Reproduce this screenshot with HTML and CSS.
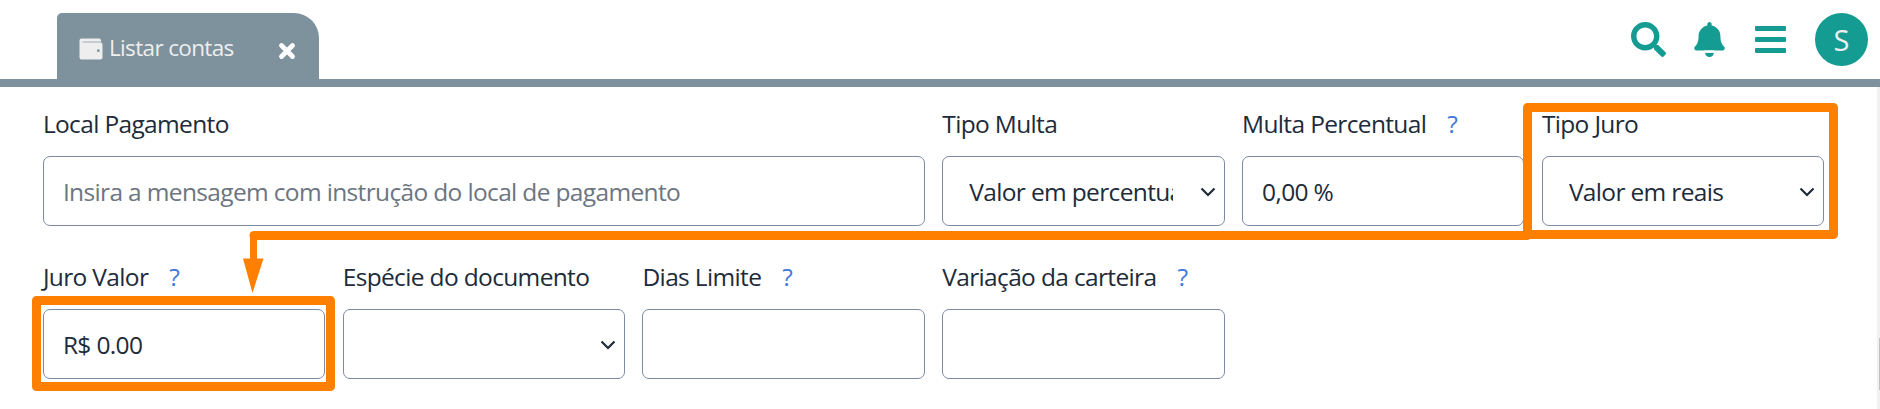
FILE: index.html
```html
<!DOCTYPE html>
<html lang="pt-BR">
<head>
<meta charset="utf-8">
<title>Listar contas</title>
<link rel="stylesheet" href="styles.css">
</head>
<body>
<header class="topbar">
  <div class="tab">
    <svg class="wallet" viewBox="0 0 24 22"><path d="M2.500.500H20a2 2 0 0 1 2 2v2h-.500a2 2 0 0 1 2 2V19.500a2 2 0 0 1-2 2H2.500a2 2 0 0 1-2-2v-17a2 2 0 0 1 2-2z" fill="#eeeeef"/><path d="M3.500 4H22.500" stroke="#a9b7be" stroke-width="1.200"/><circle cx="19.300" cy="12.700" r="1.400" fill="#7d929d"/></svg>
    <span class="tab-title">Listar contas</span>
    <svg class="close" viewBox="0 0 18 18"><path d="M3.500 3.500l11 11M14.500 3.500l-11 11" stroke="#fff" stroke-width="4.800" stroke-linecap="round"/></svg>
  </div>
  <nav class="actions">
    <svg class="icon search" viewBox="0 0 512 512"><path d="M505 442.700L405.300 343c-4.500-4.500-10.600-7-17-7H372c27.600-35.300 44-79.700 44-128C416 93.100 322.900 0 208 0S0 93.100 0 208s93.100 208 208 208c48.300 0 92.700-16.400 128-44v16.300c0 6.400 2.500 12.500 7 17l99.700 99.700c9.400 9.400 24.600 9.400 33.900 0l28.300-28.300c9.400-9.400 9.400-24.600.1-34zM208 336c-70.700 0-128-57.200-128-128 0-70.700 57.200-128 128-128 70.700 0 128 57.200 128 128 0 70.700-57.200 128-128 128z"/></svg>
    <svg class="icon bell" viewBox="0 0 448 512"><path d="M224 512c35.320 0 63.970-28.650 63.970-64H160.030c0 35.350 28.650 64 63.970 64zm215.390-149.710c-19.320-20.760-55.470-51.990-55.470-154.290 0-77.700-54.480-139.900-127.940-155.160V32c0-17.670-14.320-32-31.980-32s-31.980 14.330-31.980 32v20.840C118.560 68.100 64.080 130.300 64.080 208c0 102.300-36.150 133.530-55.470 154.290-6 6.450-8.660 14.160-8.610 21.710.11 16.400 12.980 32 32.100 32h383.800c19.120 0 32-15.600 32.100-32 .05-7.550-2.610-15.270-8.610-21.710z"/><path d="M150 432h148" stroke="#fff" stroke-width="32"/></svg>
    <svg class="icon bars" viewBox="0 0 31 27"><rect width="31" height="5" rx="1"/><rect y="11" width="31" height="5" rx="1"/><rect y="22" width="31" height="5" rx="1"/></svg>
    <span class="avatar">S</span>
  </nav>
</header>
<div class="content">
  <main class="form">
    <div class="field wide"><label class="label">Local Pagamento</label><div class="control"><span class="placeholder">Insira a mensagem com instrução do local de pagamento</span></div></div>
    <div class="field"><label class="label">Tipo Multa</label><div class="control select"><span class="value">Valor em percentual</span><svg class="chevron" viewBox="0 0 16 10"><path d="M1.500 1.500L8 8l6.500-6.500"/></svg></div></div>
    <div class="field"><label class="label">Multa Percentual<a class="help">?</a></label><div class="control">0,00 %</div></div>
    <div class="field"><label class="label">Tipo Juro</label><div class="control select"><span class="value">Valor em reais</span><svg class="chevron" viewBox="0 0 16 10"><path d="M1.500 1.500L8 8l6.500-6.500"/></svg></div></div>
    <div class="field"><label class="label">Juro Valor<a class="help">?</a></label><div class="control">R$ 0.00</div></div>
    <div class="field"><label class="label">Espécie do documento</label><div class="control select"><span class="value"></span><svg class="chevron" viewBox="0 0 16 10"><path d="M1.500 1.500L8 8l6.500-6.500"/></svg></div></div>
    <div class="field"><label class="label">Dias Limite<a class="help">?</a></label><div class="control"></div></div>
    <div class="field"><label class="label">Variação da carteira<a class="help">?</a></label><div class="control"></div></div>
  </main>
  <aside class="scrollbar"><div class="thumb"></div></aside>
</div>
<svg class="annotations" viewBox="0 0 1880 409">
  <g fill="none" stroke="#ff8000" stroke-width="9" stroke-linejoin="round">
    <rect x="1527.500" y="107.500" width="306" height="127"/>
    <rect x="36.500" y="300.500" width="294" height="86"/>
    <path d="M1527 235.500H254" stroke-linecap="round"/>
  </g>
  <path d="M250 235h7v23.500h6.500l-11 34.500-9.500-34.500h7z" fill="#ff8000"/>
</svg>
</body>
</html>
```
FILE: styles.css
```css
* { box-sizing: border-box; }
body {
  margin: 0;
  height: 409px;
  overflow: hidden;
  display: flex;
  flex-direction: column;
  background: #fff;
  color: #1d2b3a;
  font-family: "Open Sans", "Noto Sans", sans-serif;
  font-size: 24.5px;
  letter-spacing: -0.65px;
}
.topbar {
  height: 87px;
  flex: none;
  border-bottom: 8px solid #7d929d;
  padding: 13px 12px 0 57px;
  display: flex;
  justify-content: space-between;
}
.tab {
  width: 262px;
  height: 66px;
  background: #7d929d;
  border-radius: 5px 25px 0 0;
  display: flex;
  align-items: flex-start;
  color: #eeeeef;
  font-size: 22.5px;
}
.wallet { width: 24px; height: 22px; margin: 25px 6px 0 22px; }
.tab-title { width: 125px; line-height: 30px; margin-top: 20px; white-space: nowrap; }
.close { width: 18px; height: 18px; margin: 29px 0 0 44px; }
.actions { display: flex; align-items: flex-start; fill: #149c93; }
.search { width: 35px; height: 35px; margin: 9px 28px 0 0; }
.bell { width: 31px; height: 35px; margin: 9px 30px 0 0; }
.bars { width: 31px; height: 27px; margin: 13px 29px 0 0; }
.avatar {
  width: 53px;
  height: 53px;
  border-radius: 50%;
  background: #149c93;
  color: #eee;
  font-size: 29px;
  line-height: 53px;
  text-align: center;
  letter-spacing: 0;
}
.content { flex: 1; display: flex; }
.form {
  flex: 1;
  display: grid;
  grid-template-columns: repeat(6, 282.3px);
  grid-auto-rows: 135px;
  gap: 18px 17.5px;
  padding: 4px 0 0 42.9px;
}
.wide { grid-column: span 3; }
.field { display: flex; flex-direction: column; }
.label { height: 65px; line-height: 34px; padding-top: 16px; display: flex; white-space: nowrap; }
.help { color: #4479db; margin-left: 21px; }
.control {
  height: 70px;
  border: 1px solid #7d8aa3;
  border-radius: 7px;
  padding: 0 19px;
  display: flex;
  align-items: center;
  white-space: nowrap;
}
.placeholder { color: #6c7580; }
.select { padding: 0 8px 0 26px; justify-content: space-between; }
.value { width: 204px; overflow: hidden; }
.chevron { width: 16px; height: 10px; margin-top: 1px; fill: none; stroke: #1d2b3a; stroke-width: 2.200; }
.scrollbar { width: 3px; background: #f1f1f1; padding: 251px 0 0 2px; }
.thumb { height: 52px; background: #c1c1c1; }
.annotations { position: absolute; left: 0; top: 0; width: 1880px; height: 409px; }
```
